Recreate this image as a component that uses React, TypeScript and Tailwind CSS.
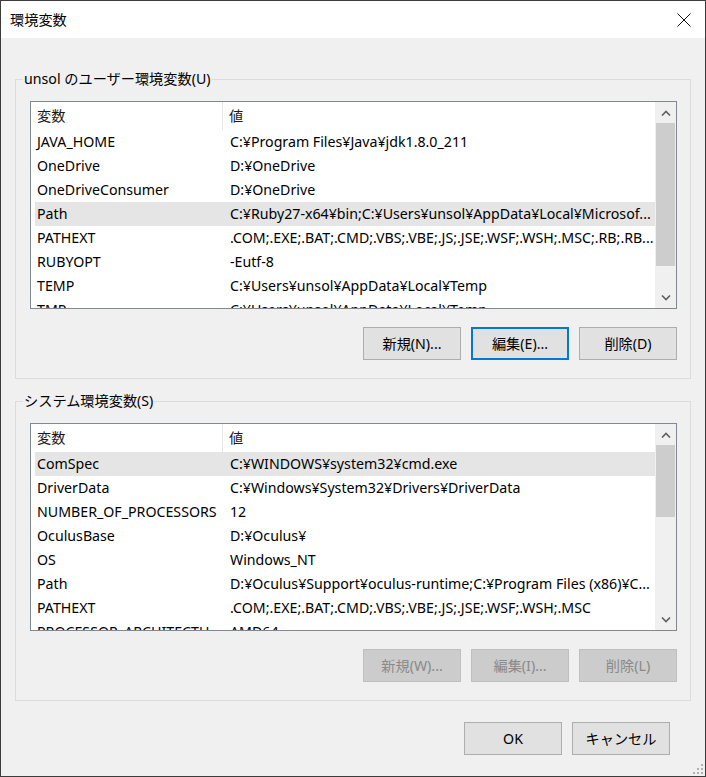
import React from 'react';

const userVars = [
  { name: 'JAVA_HOME', value: 'C:¥Program Files¥Java¥jdk1.8.0_211' },
  { name: 'OneDrive', value: 'D:¥OneDrive' },
  { name: 'OneDriveConsumer', value: 'D:¥OneDrive' },
  { name: 'Path', value: 'C:¥Ruby27-x64¥bin;C:¥Users¥unsol¥AppData¥Local¥Microsof...', selected: true },
  { name: 'PATHEXT', value: '.COM;.EXE;.BAT;.CMD;.VBS;.VBE;.JS;.JSE;.WSF;.WSH;.MSC;.RB;.RB...' },
  { name: 'RUBYOPT', value: '-Eutf-8' },
  { name: 'TEMP', value: 'C:¥Users¥unsol¥AppData¥Local¥Temp' },
  { name: 'TMP', value: 'C:¥Users¥unsol¥AppData¥Local¥Temp' },
];

const systemVars = [
  { name: 'ComSpec', value: 'C:¥WINDOWS¥system32¥cmd.exe', selected: true },
  { name: 'DriverData', value: 'C:¥Windows¥System32¥Drivers¥DriverData' },
  { name: 'NUMBER_OF_PROCESSORS', value: '12' },
  { name: 'OculusBase', value: 'D:¥Oculus¥' },
  { name: 'OS', value: 'Windows_NT' },
  { name: 'Path', value: 'D:¥Oculus¥Support¥oculus-runtime;C:¥Program Files (x86)¥C...' },
  { name: 'PATHEXT', value: '.COM;.EXE;.BAT;.CMD;.VBS;.VBE;.JS;.JSE;.WSF;.WSH;.MSC' },
  { name: 'PROCESSOR_ARCHITECTU...', value: 'AMD64' },
];

type Row = { name: string; value: string; selected?: boolean };

const Chevron = ({ up }: { up?: boolean }) => (
  <svg width="10" height="6" viewBox="0 0 10 6" className="block">
    <path
      d={up ? 'M1 5.5 L5 1.5 L9 5.5' : 'M1 0.5 L5 4.5 L9 0.5'}
      fill="none"
      stroke="#606060"
      strokeWidth="1.6"
    />
  </svg>
);

const VarList = ({ rows, thumbHeight }: { rows: Row[]; thumbHeight: number }) => (
  <div className="flex w-[647px] h-[208px] border border-[#828790] bg-white overflow-hidden">
    <div className="flex-1 overflow-hidden">
      {/* header */}
      <div className="flex h-[28px] items-center ml-[4px] text-[#1a1a1a]">
        <div className="w-[188px] h-full pl-[2px] flex items-center border-r border-[#e5e5e5]">変数</div>
        <div className="pl-[6px]">値</div>
      </div>
      {rows.map((r) => (
        <div
          key={r.name}
          className={`flex h-[24px] items-center ml-[4px] whitespace-nowrap ${r.selected ? 'bg-[#e5e5e5]' : ''}`}
        >
          <div className="w-[189px] pl-[2px] shrink-0 overflow-hidden">{r.name}</div>
          <div className="pl-[6px]">{r.value}</div>
        </div>
      ))}
    </div>
    {/* scrollbar */}
    <div className="w-[21px] h-full bg-[#f0f0f0] flex flex-col">
      <div className="h-[21px] flex items-center justify-center">
        <Chevron up />
      </div>
      <div className="flex-1 px-[1px]">
        <div className="bg-[#cdcdcd] w-full" style={{ height: thumbHeight }} />
      </div>
      <div className="h-[21px] flex items-center justify-center">
        <Chevron />
      </div>
    </div>
  </div>
);

const Btn = ({ label, focus, disabled }: { label: string; focus?: boolean; disabled?: boolean }) => (
  <button
    className={`w-[98px] h-[33px] flex items-center justify-center ${
      disabled
        ? 'bg-[#cccccc] border border-[#bfbfbf] text-[#8a8a8a]'
        : focus
        ? 'bg-[#e1e1e1] border-2 border-[#0078d7] text-black'
        : 'bg-[#e1e1e1] border border-[#adadad] text-black'
    }`}
  >
    {label}
  </button>
);

const Group = ({ title, children }: { title: string; children: React.ReactNode }) => (
  <fieldset className="border border-[#dcdcdc]">
    <legend className="ml-[7px] px-[1px] leading-[20px]">{title}</legend>
    <div className="pl-[14px] pr-[13px] pt-[12px] pb-[18px]">{children}</div>
  </fieldset>
);

export default function App() {
  return (
    <div
      className="relative w-[706px] h-[777px] border border-[#3c3c3c] bg-[#f0f0f0] flex flex-col text-[14.2px] text-black"
      style={{ fontFamily: '"Noto Sans", "Noto Sans CJK JP", sans-serif' }}
    >
      {/* Title bar */}
      <div className="h-[37px] bg-white flex items-center justify-between pl-[9px] pr-[14px]">
        <span>環境変数</span>
        <svg width="14" height="14" viewBox="0 0 14 14">
          <path d="M0.5 0.5 L13.5 13.5 M13.5 0.5 L0.5 13.5" stroke="#111" strokeWidth="1" />
        </svg>
      </div>

      <div className="flex flex-col px-[14px] pt-[31px]">
        <Group title="unsol のユーザー環境変数(U)">
          <VarList rows={userVars} thumbHeight={143} />
          <div className="flex justify-end gap-[10px] mt-[18px] w-[647px]">
            <Btn label="新規(N)..." />
            <Btn label="編集(E)..." focus />
            <Btn label="削除(D)" />
          </div>
        </Group>

        <div className="mt-[12px]">
          <Group title="システム環境変数(S)">
            <VarList rows={systemVars} thumbHeight={72} />
            <div className="flex justify-end gap-[10px] mt-[18px] w-[647px]">
              <Btn label="新規(W)..." disabled />
              <Btn label="編集(I)..." disabled />
              <Btn label="削除(L)" disabled />
            </div>
          </Group>
        </div>

        <div className="flex justify-end gap-[10px] mt-[21px] pr-[21px]">
          <Btn label="OK" />
          <Btn label="キャンセル" />
        </div>
      </div>

      {/* resize grip */}
      <svg width="10" height="10" viewBox="0 0 10 10" className="absolute right-[2px] bottom-[2px]">
        {[
          [8, 0], [8, 4], [4, 4], [8, 8], [4, 8], [0, 8],
        ].map(([x, y]) => (
          <rect key={`${x}-${y}`} x={x} y={y} width="2" height="2" fill="#b0b0b0" />
        ))}
      </svg>
    </div>
  );
}
